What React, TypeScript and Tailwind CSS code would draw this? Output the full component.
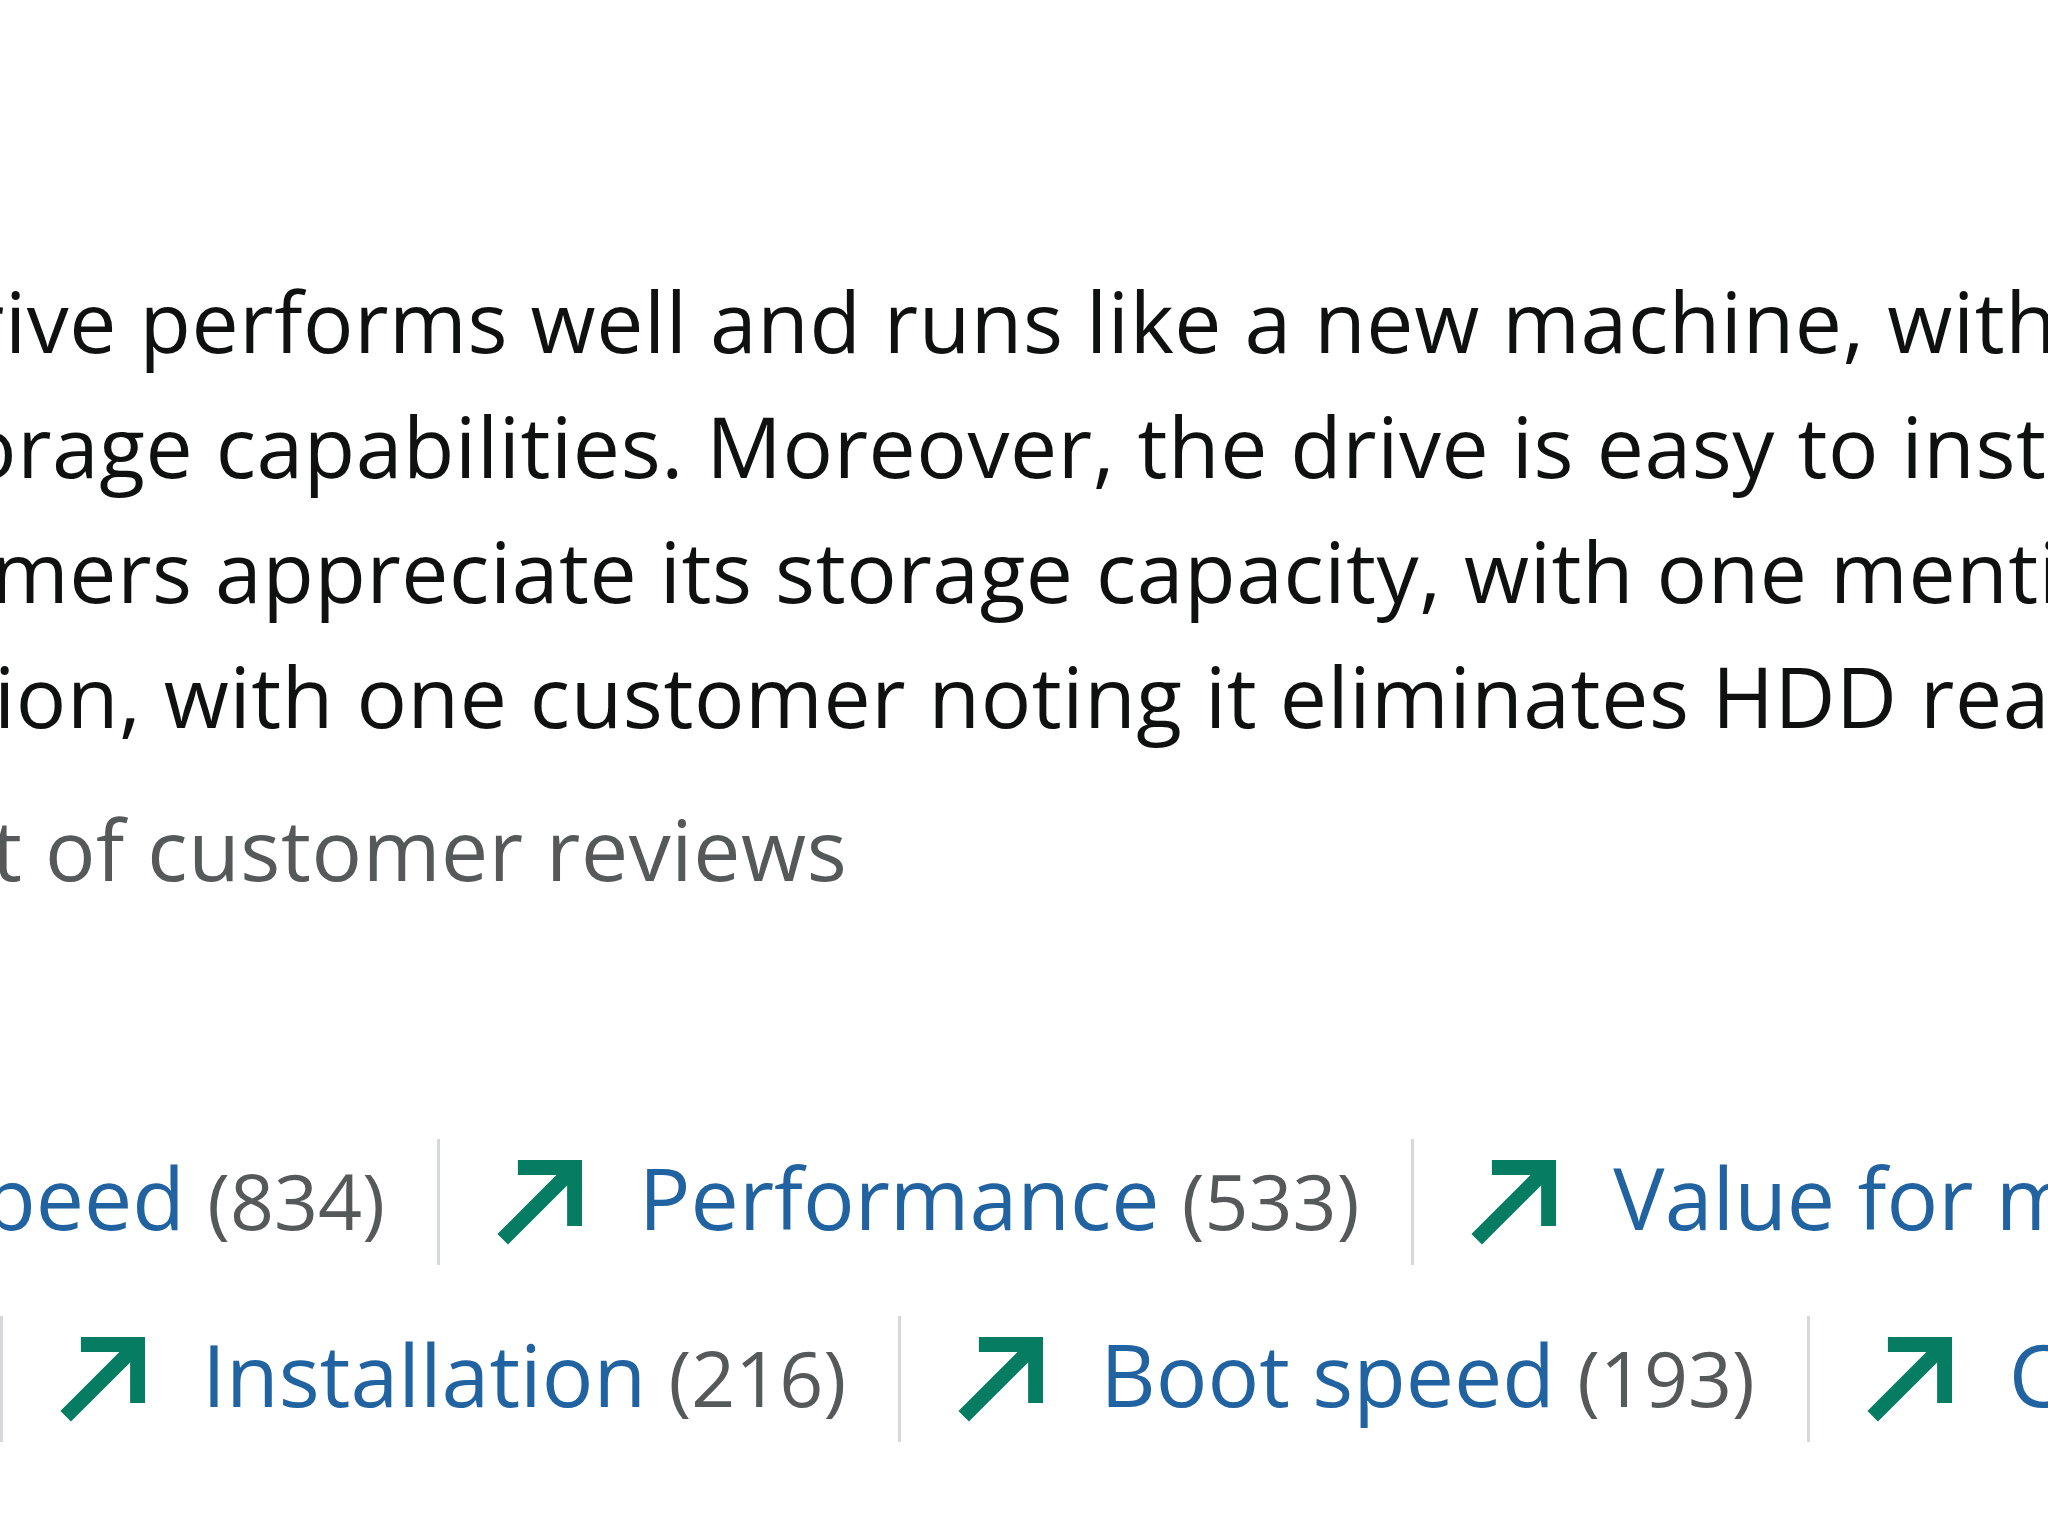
import React from "react";

type Aspect = { label: string; count: number };

const rowOne: Aspect[] = [
  { label: "Speed", count: 834 },
  { label: "Performance", count: 533 },
  { label: "Value for money", count: 402 },
];

const rowTwo: Aspect[] = [
  { label: "Installation", count: 216 },
  { label: "Boot speed", count: 193 },
  { label: "Compatibility", count: 151 },
];

const TrendArrow = () => (
  <svg
    viewBox="0 0 24 24"
    className="w-[85px] h-[85px] shrink-0"
    fill="none"
    stroke="#067D62"
    strokeWidth={4.2}
    strokeLinejoin="miter"
    strokeLinecap="butt"
  >
    <path d="M5.9 2.1H21.9V18.6" />
    <path d="M1.6 22.4L21 3" />
  </svg>
);

const AspectItem = ({ item }: { item: Aspect }) => {
  return (
    <div className="flex items-center shrink-0 h-[126px] pl-[57px] pr-[52px] border-l-[3px] border-[#d5d9d9]">
      <TrendArrow />
      <span className="ml-[57px] mb-[10px] whitespace-nowrap leading-none text-[86px] text-[#2162a1]">
        {item.label}{" "}
        <span className="text-[77px] text-[#565959]">({item.count})</span>
      </span>
    </div>
  );
};

const App = () => {
  return (
    <div className="w-[2048px] h-[1536px] overflow-hidden bg-white font-['Open_Sans',sans-serif]">
      <div className="pt-[258px] text-[84px] leading-[125px] tracking-[0.6px] text-[#0f1111] whitespace-nowrap">
        <div className="-ml-[30px]">rive performs well and runs like a new machine, with fast boot times</div>
        <div className="-ml-[34px]">orage capabilities. Moreover, the drive is easy to install and set up</div>
        <div className="-ml-[9px]">mers appreciate its storage capacity, with one mentioning its size</div>
        <div className="-ml-[6px]">ion, with one customer noting it eliminates HDD read delays</div>
      </div>
      <div className="mt-[28px] -ml-[8px] text-[84px] leading-[125px] tracking-[0.6px] text-[#565959] whitespace-nowrap">
        t of customer reviews
      </div>

      <div className="mt-[228px] flex -ml-[266px]">
        {rowOne.map((item) => (
          <AspectItem key={item.label} item={item} />
        ))}
      </div>
      <div className="mt-[51px] flex">
        {rowTwo.map((item) => (
          <AspectItem key={item.label} item={item} />
        ))}
      </div>
    </div>
  );
};

export default App;
